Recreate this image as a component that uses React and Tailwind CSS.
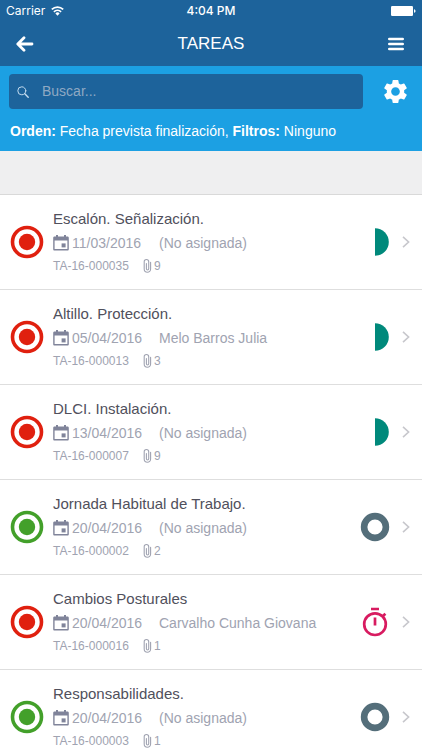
import { MdSettings } from "react-icons/md";

const tasks = [
  { title: "Escalón. Señalización.", date: "11/03/2016", who: "(No asignada)", code: "TA-16-000035", files: 9, level: "red", state: "half" },
  { title: "Altillo. Protección.", date: "05/04/2016", who: "Melo Barros Julia", code: "TA-16-000013", files: 3, level: "red", state: "half" },
  { title: "DLCI. Instalación.", date: "13/04/2016", who: "(No asignada)", code: "TA-16-000007", files: 9, level: "red", state: "half" },
  { title: "Jornada Habitual de Trabajo.", date: "20/04/2016", who: "(No asignada)", code: "TA-16-000002", files: 2, level: "green", state: "ring" },
  { title: "Cambios Posturales", date: "20/04/2016", who: "Carvalho Cunha Giovana", code: "TA-16-000016", files: 1, level: "red", state: "timer" },
  { title: "Responsabilidades.", date: "20/04/2016", who: "(No asignada)", code: "TA-16-000003", files: 1, level: "green", state: "ring" },
];

function Target({ level }) {
  return (
    <svg viewBox="0 0 34 34" className={`size-[34px] shrink-0 ${level === "red" ? "text-[#e0200f]" : "text-[#43a02a]"}`} aria-hidden="true">
      <circle cx="17" cy="17" r="14.5" fill="none" stroke="currentColor" strokeWidth="3.6" />
      <circle cx="17" cy="17" r="8.2" fill="currentColor" />
    </svg>
  );
}

function StateIcon({ state }) {
  return (
    <svg viewBox="0 0 30 30" className="size-[30px] shrink-0" aria-hidden="true">
      {state === "half" && <path d="M15 1.2a13.8 13.8 0 0 1 0 27.6z" fill="#00897b" />}
      {state === "ring" && <circle cx="15" cy="15" r="10.9" fill="none" stroke="#546e7a" strokeWidth="6.6" />}
      {state === "timer" && (
        <g fill="none" stroke="#d81b60" strokeWidth="2.7">
          <circle cx="15" cy="17.2" r="10.8" />
          <path d="M11 2h8M15 10.6v8M22.4 9.6l3-2.8" />
        </g>
      )}
    </svg>
  );
}

function Calendar() {
  return (
    <svg viewBox="0 0 16 16" className="size-4 text-[#80849a]" aria-hidden="true">
      <path d="M3 0h2v1.6h6V0h2v1.6h1.5c.8 0 1.3.6 1.3 1.4v11.2c0 .8-.5 1.4-1.3 1.4h-13c-.8 0-1.3-.6-1.3-1.4V3c0-.8.5-1.4 1.3-1.4H3zM1.6 5.6v8.5h12.8V5.6z" fill="currentColor" fillRule="evenodd" />
      <rect x="8.6" y="8.4" width="4" height="4" fill="currentColor" />
    </svg>
  );
}

function Clip() {
  return (
    <svg viewBox="0 0 9 14" className="h-[14px] w-[9px]" fill="none" stroke="currentColor" strokeWidth="1.1" strokeLinecap="round" aria-hidden="true">
      <path d="M1.2 4v6a3.1 3.1 0 0 0 6.4 0V3.2M5.7 4V2.8a2.2 2.2 0 0 0-4.5 0V4M3.4 4.6v5.2a1.1 1.1 0 0 0 2.3 0V3.6" />
    </svg>
  );
}

function Row({ task }) {
  return (
    <li>
      <a href="#tarea" className="flex h-[95px] items-center border-b border-[#dedede] pl-2.5 pr-3">
        <Target level={task.level} />
        <div className="ml-[9px] min-w-0 flex-1 text-[#a0a3b1]">
          <h2 className="text-[15px] leading-6 text-[#50505c]">{task.title}</h2>
          <p className="flex items-center text-[14px] leading-6">
            <Calendar />
            <span className="ml-[3px] w-[87px]">{task.date}</span>
            <span>{task.who}</span>
          </p>
          <p className="flex items-center text-[12px] leading-[22px]">
            <span className="w-[90px]">{task.code}</span>
            <Clip />
            <span className="ml-0.5">{task.files}</span>
          </p>
        </div>
        <StateIcon state={task.state} />
        <svg viewBox="0 0 8 12" className="ml-3 h-3 w-2" fill="none" stroke="#c7c7cc" strokeWidth="1.6" aria-hidden="true">
          <path d="M1 .8 6.6 6 1 11.2" />
        </svg>
      </a>
    </li>
  );
}

export default function App() {
  return (
    <div className="min-h-screen bg-white font-['Liberation_Sans',sans-serif]">
      <header className="bg-[#1d639b] text-white">
        <div className="grid h-[22px] grid-cols-3 items-center pl-1.5 pr-1.5 font-['Inter',sans-serif] text-[12px]">
          <span className="flex items-center gap-1.5">
            Carrier
            <svg viewBox="0 0 13 10" className="h-[10px] w-[13px]" fill="none" stroke="currentColor" strokeWidth="1.7" aria-hidden="true">
              <path d="M.8 3.4a8.2 8.2 0 0 1 11.4 0M2.9 5.8a5.2 5.2 0 0 1 7.2 0" />
              <path d="M4.4 7.4a3 3 0 0 1 4.2 0L6.5 9.7z" fill="currentColor" stroke="none" />
            </svg>
          </span>
          <span className="text-center font-medium">4:04 PM</span>
          <svg viewBox="0 0 25 10" className="h-[10px] w-[25px] justify-self-end" fill="currentColor" aria-hidden="true">
            <rect width="22" height="10" rx="1.2" />
            <path d="M23 3.2c2 .4 2 3.2 0 3.6z" />
          </svg>
        </div>
        <div className="flex h-11 items-center justify-between px-4">
          <button aria-label="Volver">
            <svg viewBox="0 0 18 16" className="h-4 w-[18px]" fill="none" stroke="currentColor" strokeWidth="2.8" strokeLinecap="round" strokeLinejoin="round" aria-hidden="true">
              <path d="M16 8H2M8 1.8 1.8 8 8 14.2" />
            </svg>
          </button>
          <h1 className="text-[17px]">TAREAS</h1>
          <button aria-label="Menú" className="mr-0.5">
            <svg viewBox="0 0 16 14" className="h-[14px] w-4" stroke="currentColor" strokeWidth="2.6" strokeLinecap="round" aria-hidden="true">
              <path d="M1.3 2h13.4M1.3 7h13.4M1.3 12h13.4" />
            </svg>
          </button>
        </div>
      </header>
      <section className="bg-[#1ca0e3] pb-2.5 pl-[9px] pr-3 pt-2 text-white">
        <div className="flex items-center">
          <label className="flex h-[35px] flex-1 items-center rounded bg-[#1d639b] pl-2">
            <svg viewBox="0 0 12 12" className="size-3" fill="none" stroke="#c5dcef" strokeWidth="1" strokeLinecap="round" aria-hidden="true">
              <circle cx="4.8" cy="4.8" r="4" />
              <path d="m7.8 7.8 3.4 3.4" strokeWidth="1.4" />
            </svg>
            <input type="search" aria-label="Buscar" placeholder="Buscar..." className="ml-[13px] min-w-0 flex-1 bg-transparent text-[14px] outline-none placeholder:text-[#8fa9c3]" />
          </label>
          <button aria-label="Ajustes" className="ml-[18px]">
            <MdSettings className="size-[29px]" />
          </button>
        </div>
        <p className="mt-3 pl-px text-[14px] leading-5">
          <b>Orden:</b> Fecha prevista finalización, <b>Filtros:</b> Ninguno
        </p>
      </section>
      <div className="h-[44px] border-b border-[#d9d9d9] bg-[#efeff0]" />
      <ul>
        {tasks.map((task) => (
          <Row key={task.code} task={task} />
        ))}
      </ul>
    </div>
  );
}
